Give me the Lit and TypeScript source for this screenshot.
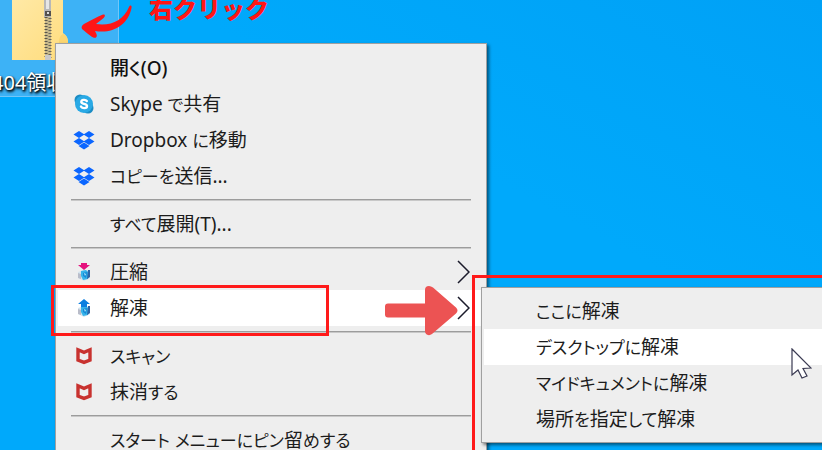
import { LitElement, html, svg, css, nothing } from "lit";
import { customElement, property } from "lit/decorators.js";

type IconName = "skype" | "dropbox" | "pack" | "unpack" | "shield";

interface Entry {
  label: string;
  icon?: IconName;
  strong?: boolean;
  active?: boolean;
  arrow?: boolean;
}

const cube = (cap: string) => svg`
  <path d="M4 10 L10 8 L16 9 L16 16 L10 19 L4 16Z" fill="#d5e4ee"/>
  <path d="M4 11 L7 12 V17 L4 16Z" fill="#b9bcc9"/>
  <path d="M7 9 L12 8 L15 11 L14 17 L9 18 L7 14Z" fill="#36b3ea"/>
  <path d="M14 8 L16 8 V15 L13 17Z" fill="#2b64a8"/>
  <path d="M9 11 L13 10 L12 16 L9 14Z" fill="#1589d6"/>
  <path d="M10 11 L12 12 L11 14Z" fill="#bdf0ff"/>
  ${cap}`;

const icons = {
  skype: svg`
    <circle cx="6" cy="6" r="5.500" fill="#1b8cc4"/>
    <circle cx="14" cy="14" r="5.500" fill="#1b8cc4"/>
    <circle cx="10" cy="10" r="9" fill="#29a9e5"/>
    <path d="M12.800 7C11.500 5.300 7.300 5.500 7.300 8C7.300 10.500 13 9.300 13 12C13 14.800 8.300 14.600 7 12.600" fill="none" stroke="#fff" stroke-width="2.400" stroke-linecap="round"/>`,
  dropbox: svg`
    <path d="M5 1 L10.500 4.500 L5 8 L-.5 4.500Z M15 1 L20.500 4.500 L15 8 L9.500 4.500Z M5 8 L10.500 11.500 L5 15 L-.5 11.500Z M15 8 L20.500 11.500 L15 15 L9.500 11.500Z M10 12.500 L15.500 16 L10 19.500 L4.500 16Z" fill="#0b66ff"/>`,
  pack: svg`${cube("")}<path d="M7 1 H13 V3 H16 L10 8 L4 3 H7Z" fill="#e5127d"/>`,
  unpack: svg`${cube("")}<path d="M10 1 L16 6 H13 V9 H7 V6 H4Z" fill="#0c7fe0"/>`,
  shield: svg`
    <path d="M4 3.800 L10 6.300 L16 3.800 V14 L10 16.400 L4 14Z" fill="none" stroke="#c8322f" stroke-width="3.400"/>`,
};

@customElement("menu-entry")
export class MenuEntry extends LitElement {
  @property({ attribute: false }) entry!: Entry;

  static styles = css`
    :host {
      display: block;
    }
    .row {
      display: flex;
      align-items: center;
      width: 100%;
      height: 36px;
      padding: 0 14px 0 16px;
      border: 0;
      background: transparent;
      color: #1c1c1c;
      font: 400 19px/34px "Noto Sans", "Noto Sans CJK JP", sans-serif;
      font-feature-settings: "palt";
      text-align: left;
      white-space: nowrap;
    }
    .active {
      background: #fff;
    }
    .strong {
      font-weight: 500;
      color: #111;
    }
    .icon {
      flex: none;
      width: 20px;
      height: 20px;
      margin-right: 16px;
      overflow: visible;
    }
    .label {
      flex: 1;
    }
    .kana {
      font-size: 17px;
    }
    .chevron {
      flex: none;
      width: 14px;
      height: 24px;
    }
  `;

  /** Kana is set one step smaller than kanji and Latin, as in Windows menus. */
  private text(label: string) {
    return label
      .split(/([\u3040-\u30ff]+)/)
      .map((run) => (/[\u3040-\u30ff]/.test(run) ? html`<span class="kana">${run}</span>` : run));
  }

  render() {
    const e = this.entry;
    return html`<button
      role="menuitem"
      class="row ${e.active ? "active" : ""} ${e.strong ? "strong" : ""}"
    >
      <svg class="icon" viewBox="0 0 20 20" aria-hidden="true">
        ${e.icon ? icons[e.icon] : nothing}
      </svg>
      <span class="label">${this.text(e.label)}</span>
      ${e.arrow
        ? html`<svg class="chevron" viewBox="0 0 14 24" aria-hidden="true">
            <path d="M2 1 L13 12 L2 23" fill="none" stroke="#1b1b2b" stroke-width="1.500" />
          </svg>`
        : nothing}
    </button>`;
  }
}

@customElement("context-menu")
export class ContextMenu extends LitElement {
  @property({ attribute: false }) groups: Entry[][] = [];

  static styles = css`
    :host {
      display: block;
      box-sizing: border-box;
      padding: 5px 2px;
      border: 1px solid #a0a0a0;
      background: #eee;
      box-shadow: 2px 2px 3px rgba(0, 0, 0, 0.5);
    }
    .line {
      height: 1px;
      margin: 5px 13px;
      border: 0;
      border-top: 1px solid #9c9c9c;
      background: #c8c8c8;
    }
  `;

  render() {
    return this.groups.map(
      (group, i) => html`${i ? html`<hr class="line" />` : nothing}
      ${group.map((entry) => html`<menu-entry .entry=${entry}></menu-entry>`)}`
    );
  }
}

@customElement("app-root")
export class AppRoot extends LitElement {
  static styles = css`
    :host {
      display: block;
      position: relative;
      height: 100vh;
      overflow: hidden;
      background: linear-gradient(to top right, #00a9fb 60%, #00a1f6 100%);
    }
    .file {
      position: absolute;
      left: -1px;
      top: 0;
      width: 120px;
      height: 97px;
      box-sizing: border-box;
      border: 1px solid #72c6f8;
      border-top: 0;
      background: #3db2f6;
    }
    .folder {
      display: block;
      width: 80px;
      height: 64px;
    }
    .name {
      display: block;
      margin-left: -8px;
      color: #fff;
      font: 400 20px/38px "Noto Sans", "Noto Sans CJK JP", sans-serif;
      text-shadow: 1px 1px 2px #000, 1px 2px 3px #000;
      white-space: nowrap;
    }
    .hint {
      position: absolute;
      left: 149px;
      top: -10px;
      color: #ff1616;
      font: 900 24px/36px "Noto Sans CJK JP", sans-serif;
      white-space: nowrap;
    }
    .swoosh {
      position: absolute;
      left: 80px;
      top: 4px;
      width: 54px;
      height: 36px;
    }
    .main {
      position: absolute;
      left: 55px;
      top: 43px;
      width: 432px;
      padding-top: 6px;
    }
    .sub {
      position: absolute;
      left: 481px;
      top: 287px;
      width: 400px;
    }
    .mark {
      position: absolute;
      box-sizing: border-box;
      border: 3px solid #ff1a1a;
    }
    .mark-item {
      left: 51px;
      top: 285px;
      width: 278px;
      height: 51px;
    }
    .mark-sub {
      left: 472px;
      top: 275px;
      width: 420px;
      height: 200px;
    }
    .pointer {
      position: absolute;
      left: 385px;
      top: 286px;
      width: 73px;
      height: 50px;
    }
    .cursor {
      position: absolute;
      left: 791px;
      top: 348px;
      width: 21px;
      height: 31px;
    }
  `;

  private main: Entry[][] = [
    [
      { label: "開く(O)", strong: true },
      { label: "Skype で共有", icon: "skype" },
      { label: "Dropbox に移動", icon: "dropbox" },
      { label: "コピーを送信...", icon: "dropbox" },
    ],
    [{ label: "すべて展開(T)..." }],
    [
      { label: "圧縮", icon: "pack", arrow: true },
      { label: "解凍", icon: "unpack", arrow: true, active: true },
    ],
    [
      { label: "スキャン", icon: "shield" },
      { label: "抹消する", icon: "shield" },
    ],
    [{ label: "スタート メニューにピン留めする" }],
  ];

  private sub: Entry[][] = [
    [
      { label: "ここに解凍" },
      { label: "デスクトップに解凍", active: true },
      { label: "マイドキュメントに解凍" },
      { label: "場所を指定して解凍" },
    ],
  ];

  render() {
    return html`
      <div class="file">
        <svg class="folder" viewBox="0 0 80 64" aria-hidden="true">
          <defs>
            <linearGradient id="paper" x2="1" y2="1">
              <stop stop-color="#ffe9a6" />
              <stop offset="1" stop-color="#ffdc7c" />
            </linearGradient>
          </defs>
          <path d="M12 0 H63 V33 Q68 36 68 42 V60 H12Z" fill="url(#paper)" />
          <path d="M63 34 Q59 36 59 42 V60 H68 V41 Q67 35 63 34Z" fill="#fbd570" />
          <path d="M45 0 H51 V60 H45Z" fill="#c8b98a" />
          <path d="M46 17 V58" stroke="#59554a" stroke-width="3" stroke-dasharray="1 2" />
          <path d="M50 18 V58" stroke="#6b665a" stroke-width="3" stroke-dasharray="1 2" />
          <path d="M44 0 H51 V17 H44Z" fill="#b8b8b8" />
          <path d="M46 0 H49 V9 H46Z" fill="#e6e6e6" />
          <path d="M45 11 H51 V16 H45Z" fill="#54524f" />
          <path d="M47 12 H49 V14 H47Z" fill="#ddd" />
          <path d="M45 55 H51 V60 H45Z" fill="#c9c9c9" />
        </svg>
        <span class="name">404領収書</span>
      </div>

      <svg class="swoosh" viewBox="80 4 54 36" aria-hidden="true">
        <path
          d="M129 7 C130 5 132 5 131.500 8 C128 25 113 34 95 31 C96 33 98 36 96 37.500 C94 39 89 35 82 29 C81 27 82 25 84 24 C90 21 97 17 103 14.500 C106 14 105 17 103 18.500 L96 24 C111 26 123 21 129 7Z"
          fill="#ff1616"
        />
      </svg>
      <span class="hint">右クリック</span>

      <context-menu class="main" role="menu" .groups=${this.main}></context-menu>
      <div class="mark mark-item"></div>
      <div class="mark mark-sub"></div>
      <context-menu class="sub" role="menu" .groups=${this.sub}></context-menu>

      <svg class="pointer" viewBox="0 0 73 50" aria-hidden="true">
        <path
          d="M3 17.500 H40 V4 Q40 0 44 0 Q46 0 48 1.500 L71 21.500 Q74 24.500 71 27.500 L47 48 Q45 49.500 43 49 Q40 48 40 45 V31.500 H3 Q0 31.500 0 28.500 V20.500 Q0 17.500 3 17.500Z"
          fill="#ec5353"
        />
      </svg>
      <svg class="cursor" viewBox="0 0 21 31" aria-hidden="true">
        <path
          d="M1 1 L20 20 L12 20.500 L16 28 L11 30 L7 22 L1 27Z"
          fill="#fff"
          stroke="#3a3a52"
          stroke-width="1.200"
        />
      </svg>
    `;
  }
}
